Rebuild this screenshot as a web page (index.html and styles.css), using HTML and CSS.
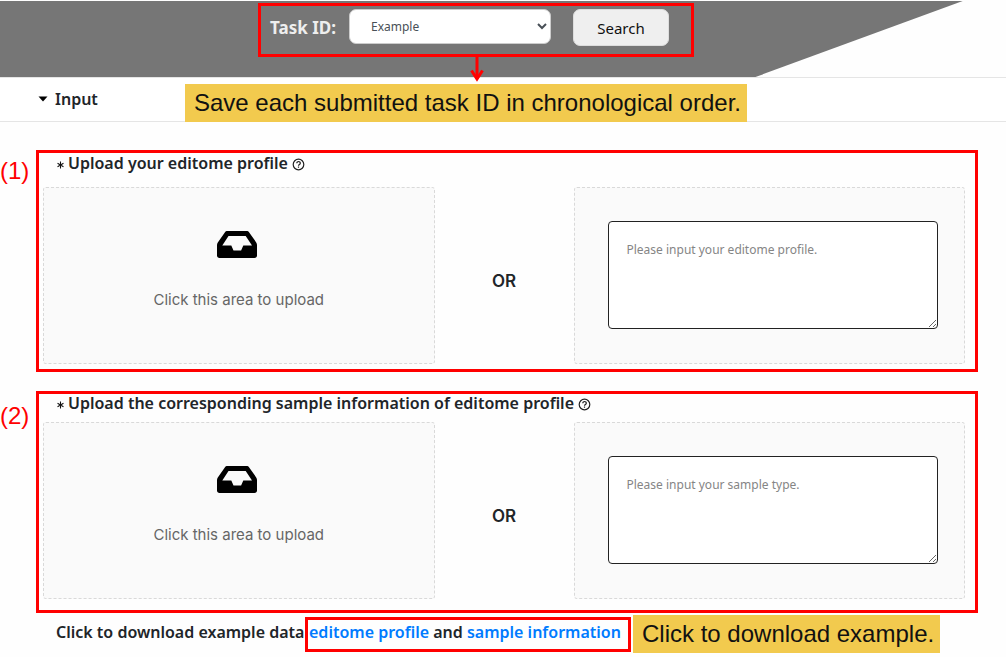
FILE: index.html
```html
<!DOCTYPE html>
<html lang="en">
<head>
<meta charset="utf-8">
<title>Editome profile upload</title>
<link rel="stylesheet" href="styles.css">
</head>
<body>
<header class="banner">
  <form class="task outline">
    <label class="task-label" for="task">Task ID:</label>
    <select class="task-select" id="task"><option>Example</option></select>
    <button class="task-search" type="button">Search</button>
    <svg class="arrow" width="14" height="26" viewBox="0 0 14 26" fill="none" stroke="#f00"><path d="M7 0v22" stroke-width="3"/><path d="M1.500 13.500L7 22l5.500-8.500" stroke-width="3"/></svg>
  </form>
</header>
<main>
  <div class="panel-head">
    <button class="toggle" type="button"><svg width="10" height="6" viewBox="0 0 10 6"><path d="M.5.500h9L5 5.500z" fill="#000"/></svg>Input</button>
    <p class="note">Save each submitted task ID in chronological order.</p>
  </div>

  <section class="step">
    <span class="step-number">(1)</span>
    <div class="step-box outline">
      <h2 class="step-title">
        <svg class="star" width="7" height="8" viewBox="0 0 8 8" stroke="#111" stroke-width="1.200"><path d="M4 0v8M.6 2l6.800 4M.6 6l6.800-4"/></svg>
        <label for="profile">Upload your editome profile</label>
        <svg class="help" width="13" height="13" viewBox="0 0 13 13" fill="none" stroke="#222" stroke-width="1.200"><circle cx="6.500" cy="6.500" r="5.300"/><path d="M4.800 5.200c0-2.300 3.600-2.200 3.500 0 0 1.300-1.800 1.200-1.800 2.500M6.500 8.600v1.200"/></svg>
      </h2>
      <div class="choices">
        <label class="zone drop"><input class="file" type="file">
          <svg class="tray" width="40" height="27" viewBox="0 0 40 27"><path fill-rule="evenodd" d="M10.500 0h19c1.200 0 2 .4 2.700 1.400l7 10c.5.800.8 1.600.8 2.600v10.500c0 1.500-1 2.500-2.500 2.500h-35C1 27 0 26 0 24.500V14c0-1 .3-1.800.8-2.600l7-10C8.500.4 9.300 0 10.500 0zM11.500 5L5.300 14.500h9l2.200 5h7.600l2.200-5h8.700L28.700 5z"/></svg>
          <span>Click this area to upload</span>
        </label>
        <strong class="or">OR</strong>
        <div class="zone entry"><textarea class="text" id="profile" placeholder="Please input your editome profile."></textarea></div>
      </div>
    </div>
  </section>

  <section class="step step-compact">
    <span class="step-number">(2)</span>
    <div class="step-box outline">
      <h2 class="step-title">
        <svg class="star" width="7" height="8" viewBox="0 0 8 8" stroke="#111" stroke-width="1.200"><path d="M4 0v8M.6 2l6.800 4M.6 6l6.800-4"/></svg>
        <label for="sample">Upload the corresponding sample information of editome profile</label>
        <svg class="help" width="13" height="13" viewBox="0 0 13 13" fill="none" stroke="#222" stroke-width="1.200"><circle cx="6.500" cy="6.500" r="5.300"/><path d="M4.800 5.200c0-2.300 3.600-2.200 3.500 0 0 1.300-1.800 1.200-1.800 2.500M6.500 8.600v1.200"/></svg>
      </h2>
      <div class="choices">
        <label class="zone drop"><input class="file" type="file">
          <svg class="tray" width="40" height="27" viewBox="0 0 40 27"><path fill-rule="evenodd" d="M10.500 0h19c1.200 0 2 .4 2.700 1.400l7 10c.5.800.8 1.600.8 2.600v10.500c0 1.500-1 2.500-2.500 2.500h-35C1 27 0 26 0 24.500V14c0-1 .3-1.800.8-2.600l7-10C8.500.4 9.300 0 10.500 0zM11.500 5L5.300 14.500h9l2.200 5h7.600l2.200-5h8.700L28.700 5z"/></svg>
          <span>Click this area to upload</span>
        </label>
        <strong class="or">OR</strong>
        <div class="zone entry"><textarea class="text" id="sample" placeholder="Please input your sample type."></textarea></div>
      </div>
    </div>
  </section>

  <footer class="downloads">
    <span class="downloads-label">Click to download example data</span>
    <span class="links outline"><a href="#profile">editome profile</a> and <a href="#sample">sample information</a></span>
    <p class="note">Click to download example.</p>
  </footer>
</main>
</body>
</html>
```
FILE: styles.css
```css
* { box-sizing: border-box; }
body { margin: 0; background: #fefefe; color: #212529; font: 16px/20px "Noto Sans", sans-serif; }
h2, p { margin: 0; }
.outline { border: 3px solid #f00; }

.banner { position: relative; height: 77px; padding: 3px 0 0 258px; }
.banner::before { content: ""; position: absolute; inset: 1px 0 0; background: #767676; clip-path: polygon(0 0, 95.7% 0, 75.1% 100%, 0 100%); }
.task { position: relative; display: flex; align-items: flex-start; width: 436px; height: 54px; padding: 3px 22px 0 9px; }
.task-label { flex: 1; font-size: 17px; font-weight: 700; line-height: 38px; color: #eee; white-space: nowrap; }
.task-select { width: 202px; height: 35px; margin: 0 22px 0 0; padding: 0 0 0 17px; border: 1px solid #ccc; border-radius: 7px; background: #fff; color: #495057; font: 12px "Noto Sans", sans-serif; }
.task-search { width: 96px; height: 37px; padding: 0; border: 1px solid #ddd; border-radius: 7px; background: #efefef; color: #111; font: 15px "Noto Sans", sans-serif; }
.arrow { position: absolute; left: 209px; top: 51px; z-index: 2; }

.panel-head { display: flex; align-items: flex-end; height: 45px; border: solid #e5e5e5; border-width: 1px 0; background: #fff; }
.toggle { display: flex; align-items: center; gap: 7px; width: 185px; height: 43px; padding: 0 0 2px 38px; border: 0; background: none; color: #212529; font: 600 16px "Noto Sans", sans-serif; }
.note { padding: 0 6px 0 9px; margin-bottom: -1px; background: #f2ca4e; color: #111; font: 24px/38px "Liberation Sans", sans-serif; white-space: nowrap; }

.step { display: grid; grid-template-columns: 36px 1fr; margin: 28px 28px 0 0; }
.step-compact { margin-top: 19px; }
.step-number { padding-top: 7px; color: #f00; font: 24px/28px "Liberation Sans", sans-serif; }
.step-compact .step-number { padding-top: 11px; }
.step-box { padding: 0 10px 5px 4px; }
.step-compact .step-box { padding-bottom: 11px; }
.step-title { display: flex; align-items: center; height: 20px; margin: 0 0 14px 14px; font-size: 16px; font-weight: 600; }
.step-compact .step-title { height: 18px; margin-bottom: 10px; }
.star { margin: 4px 4px 0 0; }
.help { margin: 2px 0 0 4px; }
.choices { display: grid; grid-template-columns: 1fr 139px 1fr; }
.zone { height: 177px; border: 1px dashed #d9d9d9; border-radius: 3px; background: #fafafa; }
.drop { display: flex; flex-direction: column; align-items: center; padding-top: 43px; color: #666; font: 15px/20px Inter, sans-serif; cursor: pointer; }
.file { position: absolute; width: 1px; height: 1px; opacity: 0; }
.tray { margin: 0 4px 32px 0; }
.or { align-self: center; padding-top: 10px; text-align: center; font: 600 17px/20px Inter, sans-serif; }
.entry { padding: 33px 26px 33px 33px; }
.text { display: block; width: 100%; height: 108px; padding: 18px; border: 1px solid #222; border-radius: 4px; background: #fff; font: 12px/20px "Noto Sans", sans-serif; }
.text::placeholder { color: #858585; }

.downloads { display: flex; align-items: flex-start; padding: 2px 0 2px 56px; font-weight: 600; }
.downloads-label { width: 249px; line-height: 35px; white-space: nowrap; }
.links { width: 326px; height: 35px; margin: 2px 2px 0 0; padding-left: 1px; line-height: 25px; white-space: nowrap; }
.links a { color: #007bff; text-decoration: none; }
```
